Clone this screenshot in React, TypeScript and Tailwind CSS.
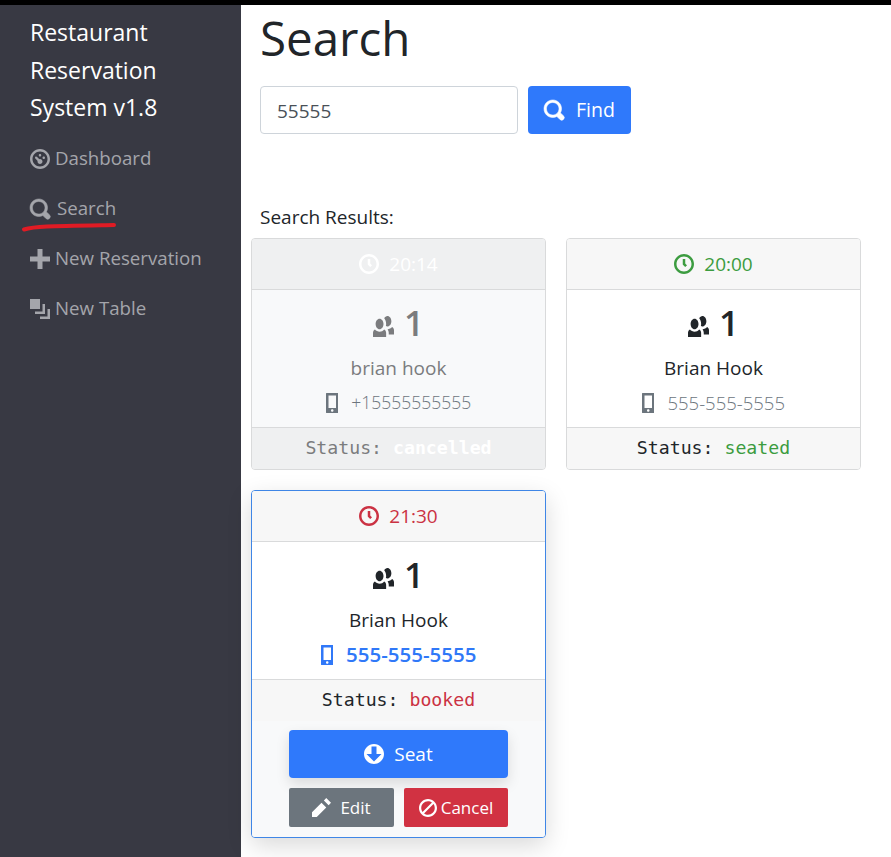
import type { ReactNode } from "react";

const icons = {
  search:
    "M3.5 0c-1.93 0-3.5 1.57-3.5 3.5s1.57 3.5 3.5 3.5c.59 0 1.17-.14 1.66-.41a1 1 0 0 0 .13.13l1 1a1.02 1.02 0 1 0 1.44-1.44l-1-1a1 1 0 0 0-.16-.13c.27-.49.44-1.06.44-1.66 0-1.93-1.57-3.5-3.5-3.5zm0 1c1.39 0 2.5 1.11 2.5 2.5 0 .66-.24 1.27-.66 1.72-.01.01-.02.02-.03.03a1 1 0 0 0-.13.13c-.44.4-1.04.63-1.69.63-1.39 0-2.5-1.11-2.5-2.5s1.11-2.5 2.5-2.5z",
  clock:
    "M4 0c-2.2 0-4 1.8-4 4s1.8 4 4 4 4-1.8 4-4-1.8-4-4-4zm0 1c1.66 0 3 1.34 3 3s-1.34 3-3 3-3-1.34-3-3 1.34-3 3-3zm-.5 1v2.22l.16.13.5.5.34.38.72-.72-.38-.34-.34-.34v-1.81h-1z",
  people:
    "M5.5 0c-.51 0-.95.35-1.22.88.45.54.72 1.28.72 2.13 0 .29-.03.55-.09.81.19.11.38.19.59.19.83 0 1.5-.9 1.5-2s-.67-2-1.5-2zm-3 1c-.83 0-1.5.9-1.5 2s.67 2 1.5 2 1.5-.9 1.5-2-.67-2-1.5-2zm4.75 3.16c-.43.51-1.02.82-1.69.84.27.38.44.84.44 1.34v.66h2v-1.66c0-.52-.31-.97-.75-1.19zm-6.5 1c-.44.22-.75.67-.75 1.19v1.66h5v-1.66c0-.52-.31-.97-.75-1.19-.45.53-1.06.84-1.75.84s-1.3-.32-1.75-.84z",
  plus: "M3 0v3h-3v2h3v3h2v-3h3v-2h-3v-3h-2z",
  layers: "M0 0v4h4v-4h-4zm5 2v3h-3v1h4v-4h-1zm2 2v3h-3v1h4v-4h-1z",
  dashboard:
    "M4 0c-2.2 0-4 1.8-4 4s1.8 4 4 4 4-1.8 4-4-1.8-4-4-4zm0 1c1.66 0 3 1.34 3 3s-1.34 3-3 3-3-1.34-3-3 1.34-3 3-3zm0 1c-.28 0-.5.22-.5.5s.22.5.5.5.5-.22.5-.5-.22-.5-.5-.5zm-1.66 1a.5.5 0 0 0-.19.84l.91.91c-.02.08-.06.16-.06.25 0 .55.45 1 1 1s1-.45 1-1-.45-1-1-1c-.09 0-.17.04-.25.06l-.91-.91a.5.5 0 0 0-.44-.16.5.5 0 0 0-.06 0zm3.16 0c-.28 0-.5.22-.5.5s.22.5.5.5.5-.22.5-.5-.22-.5-.5-.5z",
  arrowDown: "M4 0c-2.2 0-4 1.8-4 4s1.8 4 4 4 4-1.8 4-4-1.8-4-4-4zm-1 1h2v3h2l-3 3-3-3h2v-3z",
  pencil: "M6 0l-1 1 2 2 1-1-2-2zm-2 2l-4 4v2h2l4-4-2-2z",
  ban: "M4 0c-2.2 0-4 1.8-4 4s1.8 4 4 4 4-1.8 4-4-1.8-4-4-4zm0 1c.66 0 1.26.21 1.75.56l-4.19 4.19c-.35-.49-.56-1.09-.56-1.75 0-1.66 1.34-3 3-3zm2.44 1.25c.35.49.56 1.09.56 1.75 0 1.66-1.34 3-3 3-.66 0-1.26-.21-1.75-.56l4.19-4.19z",
};

const Icon = ({ name, className, bold }: { name: keyof typeof icons; className: string; bold?: boolean }) => (
  <svg
    viewBox="0 0 8 8"
    fill="currentColor"
    stroke={bold ? "currentColor" : "none"}
    strokeWidth={bold ? 0.22 : 0}
    className={`overflow-visible ${className}`}
  >
    <path d={icons[name]} />
  </svg>
);

const PhoneIcon = ({ className }: { className: string }) => (
  <svg viewBox="0 0 5 8" fill="currentColor" className={className}>
    <path d="M.19 0c-.11 0-.19.08-.19.19v7.63c0 .11.08.19.19.19h4.63c.11 0 .19-.08.19-.19v-7.63c0-.11-.08-.19-.19-.19h-4.63zm.81 1h3v5h-3v-5zm1.5 5.5c.28 0 .5.22.5.5s-.22.5-.5.5-.5-.22-.5-.5.22-.5.5-.5z" />
  </svg>
);

const NavItem = ({
  icon,
  label,
  bold,
  children,
}: {
  icon: keyof typeof icons;
  label: string;
  bold?: boolean;
  children?: ReactNode;
}) => (
  <div className={`relative flex h-[50px] items-center pl-[30px] text-[18.7px] text-[#a4a5ab] ${bold ? "gap-[7px]" : "gap-[5px]"}`}>
    <Icon name={icon} bold={bold} className="h-[20px] w-[20px] shrink-0" />
    <span>{label}</span>
    {children}
  </div>
);

type CardProps = {
  time: string;
  timeColor: string;
  name: string;
  phone: string;
  status: string;
  statusColor: string;
  cancelled?: boolean;
  active?: boolean;
};

const ReservationCard = ({ time, timeColor, name, phone, status, statusColor, cancelled, active }: CardProps) => {
  const phoneText = active
    ? "text-[20.5px] font-semibold text-[#3078f8]"
    : cancelled
      ? "text-[17.5px] font-light text-[#6c757d]"
      : "text-[18.5px] font-light text-[#6c757d]";

  return (
    <div
      className={`overflow-hidden rounded-[4px] border ${
        active ? "border-[#3f86e6] shadow-[0_8px_24px_rgba(0,0,0,0.15)]" : "border-[#d9dadb]"
      } ${cancelled ? "bg-[#f8f9fa] text-[#7b7c7e]" : "bg-white text-[#212529]"}`}
    >
      <div
        className={`flex h-[51px] items-center justify-center gap-[10px] border-b border-[#d9dadb] text-[19px] ${timeColor} ${
          cancelled ? "bg-[#eff0f1]" : "bg-[#f7f7f7]"
        }`}
      >
        <Icon name="clock" className="h-[20px] w-[20px]" />
        <span>{time}</span>
      </div>
      <div className="flex h-[138px] flex-col items-center border-b border-[#d9dadb] pt-[9px]">
        <div className="flex h-[48px] items-center gap-[10px] text-[35px] font-semibold">
          <Icon name="people" className="mt-[6px] h-[21px] w-[21px]" />
          <span>1</span>
        </div>
        <div className="mt-[8px] text-[19px] leading-[27px]">{name}</div>
        <div className="mt-[7px] flex items-center gap-[13px] leading-[27px]">
          <PhoneIcon className={`h-[20px] w-[12.5px] ${active ? "text-[#3078f8]" : "text-[#6c757d]"}`} />
          <span className={phoneText}>{phone}</span>
        </div>
      </div>
      <div
        className={`flex h-[41px] items-center justify-center pb-[2px] font-['DejaVu_Sans_Mono',monospace] text-[18.2px] ${
          cancelled ? "bg-[#eff0f1]" : "bg-[#f7f7f7]"
        }`}
      >
        <span className="whitespace-pre">Status: </span>
        <span className={`${statusColor} ${cancelled ? "font-bold" : ""}`}>{status}</span>
      </div>
      {active && (
        <div className="flex flex-col gap-[10px] bg-[#f8f9fa] px-[37px] pb-[10px] pt-[9px]">
          <button className="flex h-[48px] items-center justify-center gap-[10px] rounded-[4px] bg-[#2f79fb] text-[19px] text-white shadow-[0_6px_14px_rgba(0,0,0,0.12)]">
            <Icon name="arrowDown" className="h-[20px] w-[20px]" />
            Seat
          </button>
          <div className="flex gap-[10px]">
            <button className="flex h-[39px] w-[105px] items-center justify-center gap-[9px] rounded-[2px] bg-[#6c757d] text-[17px] text-white">
              <Icon name="pencil" className="h-[19px] w-[19px]" />
              Edit
            </button>
            <button className="flex h-[39px] flex-1 items-center justify-center gap-[4px] rounded-[2px] bg-[#d13242] text-[17px] text-white">
              <Icon name="ban" className="h-[18px] w-[18px]" />
              Cancel
            </button>
          </div>
        </div>
      )}
    </div>
  );
};

export default function App() {
  return (
    <div className="flex h-[857px] w-[891px] flex-col overflow-hidden bg-white font-['Open_Sans',sans-serif] text-[#212529]">
      <div className="h-[5px] shrink-0 bg-black" />
      <div className="flex flex-1">
        <aside className="w-[241px] shrink-0 bg-[#383943]">
          <div className="pl-[30px] pt-[9px] text-[23px] leading-[37.5px] text-white">
            Restaurant
            <br />
            Reservation
            <br />
            System v1.8
          </div>
          <nav className="mt-[7px]">
            <NavItem icon="dashboard" label="Dashboard" />
            <NavItem icon="search" label="Search" bold>
              <svg viewBox="0 0 96 12" fill="none" className="absolute left-[21px] top-[36px] h-[12px] w-[96px]">
                <path d="M3 9.5 C 14 6, 30 6, 93 5" stroke="#e01b24" strokeWidth="4" strokeLinecap="round" />
              </svg>
            </NavItem>
            <NavItem icon="plus" label="New Reservation" />
            <NavItem icon="layers" label="New Table" />
          </nav>
        </aside>
        <main className="flex-1 pl-[10px] pt-[5px]">
          <h1 className="pl-[9px] text-[47.5px] font-medium leading-[55px]">Search</h1>
          <div className="mt-[21px] flex gap-[10px] pl-[9px]">
            <input
              readOnly
              value="55555"
              className="h-[48px] w-[258px] rounded-[4px] border border-[#ced4da] px-[16px] pt-[2px] text-[19px] text-[#495057] outline-none"
            />
            <button className="flex h-[48px] w-[103px] items-center justify-center gap-[12px] rounded-[4px] bg-[#2f79fb] text-[19.5px] text-white">
              <Icon name="search" bold className="h-[20px] w-[20px]" />
              Find
            </button>
          </div>
          <div className="mt-[70px] pl-[9px] text-[19px] font-medium leading-[27px]">Search Results:</div>
          <div className="mt-[7px] grid w-[610px] grid-cols-2 items-start gap-x-[20px] gap-y-[20px]">
            <ReservationCard time="20:14" timeColor="text-white" name="brian hook" phone="+15555555555" status="cancelled" statusColor="text-white" cancelled />
            <ReservationCard time="20:00" timeColor="text-[#3c9c40]" name="Brian Hook" phone="555-555-5555" status="seated" statusColor="text-[#3c9c40]" />
            <ReservationCard time="21:30" timeColor="text-[#cb3243]" name="Brian Hook" phone="555-555-5555" status="booked" statusColor="text-[#cb3243]" active />
          </div>
        </main>
      </div>
    </div>
  );
}
